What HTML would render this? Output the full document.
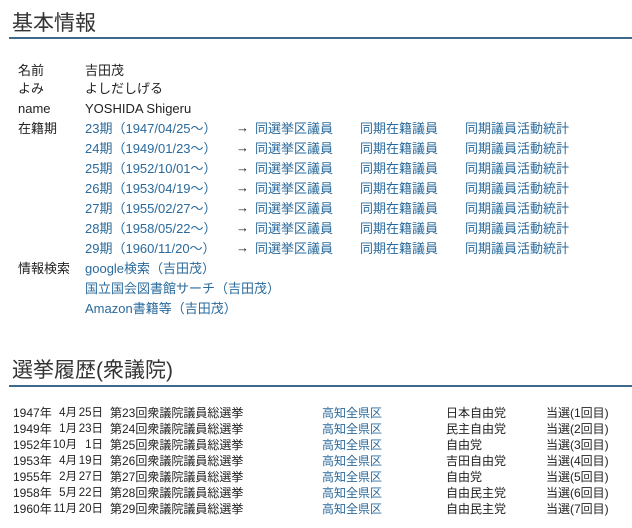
<!DOCTYPE html>
<html><head><meta charset="utf-8"><style>
body{margin:0;width:632px;height:528px;background:#fff;font-family:"Liberation Sans","Noto Sans CJK JP",sans-serif;font-size:13px;color:#222;position:relative;overflow:hidden}
.h{position:absolute;left:12px;font-size:21px;color:#333;font-weight:normal;margin:0;line-height:26px}
.ln{position:absolute;left:9px;right:0;height:2px;background:#3f6a8a}
.t{position:absolute;white-space:nowrap;line-height:16px}
.s{font-size:12px}
.d{font-size:11.5px}
a{color:#2a6a9c;text-decoration:none}
</style></head><body>
<div class="h" style="top:11px">基本情報</div>
<div class="ln" style="top:37px"></div>
<div id="info"></div>
<div class="h" style="top:358px">選挙履歴(衆議院)</div>
<div class="ln" style="top:385px"></div>
<div id="tb"></div>
<script>
var s='';function t(x,y,h,link,c){s+='<div class="t'+(c?' s':'')+'" style="left:'+x+'px;top:'+y+'px">'+(link?'<a>'+h+'</a>':h)+'</div>';}
function r(x,y,h){s+='<div class="t d" style="right:'+(632-x)+'px;top:'+y+'px">'+h+'</div>';}
t(18,63,'名前');t(85,63,'吉田茂');
t(18,81,'よみ');t(85,81,'よしだしげる');
t(18,101,'name');t(85,101,'YOSHIDA Shigeru');
var p=[['23','1947/04/25'],['24','1949/01/23'],['25','1952/10/01'],['26','1953/04/19'],['27','1955/02/27'],['28','1958/05/22'],['29','1960/11/20']];
p.forEach(function(q,i){var y=121+i*20;if(i==0)t(18,y,'在籍期');t(85,y,q[0]+'期（'+q[1]+'～）',1);t(236,y-1,'→');t(255,y,'同選挙区議員',1);t(360,y,'同期在籍議員',1);t(465,y,'同期議員活動統計',1);});
t(18,261,'情報検索');t(85,261,'google検索（吉田茂）',1);t(85,281,'国立国会図書館サーチ（吉田茂）',1);t(85,301,'Amazon書籍等（吉田茂）',1);
document.getElementById('info').innerHTML=s;s='';
var e=[['1947','4','25','23','日本自由党','1'],['1949','1','23','24','民主自由党','2'],['1952','10','1','25','自由党','3'],['1953','4','19','26','吉田自由党','4'],['1955','2','27','27','自由党','5'],['1958','5','22','28','自由民主党','6'],['1960','11','20','29','自由民主党','7']];
e.forEach(function(q,i){var y=405+i*16;t(13,y,q[0]+'年',0,1);r(77,y,q[1]+'月');r(103,y,q[2]+'日');t(110,y,'第'+q[3]+'回衆議院議員総選挙',0,1);t(322,y,'高知全県区',1,1);t(446,y,q[4],0,1);t(546,y,'当選('+q[5]+'回目)',0,1);});
document.getElementById('tb').innerHTML=s;
</script>
</body></html>
